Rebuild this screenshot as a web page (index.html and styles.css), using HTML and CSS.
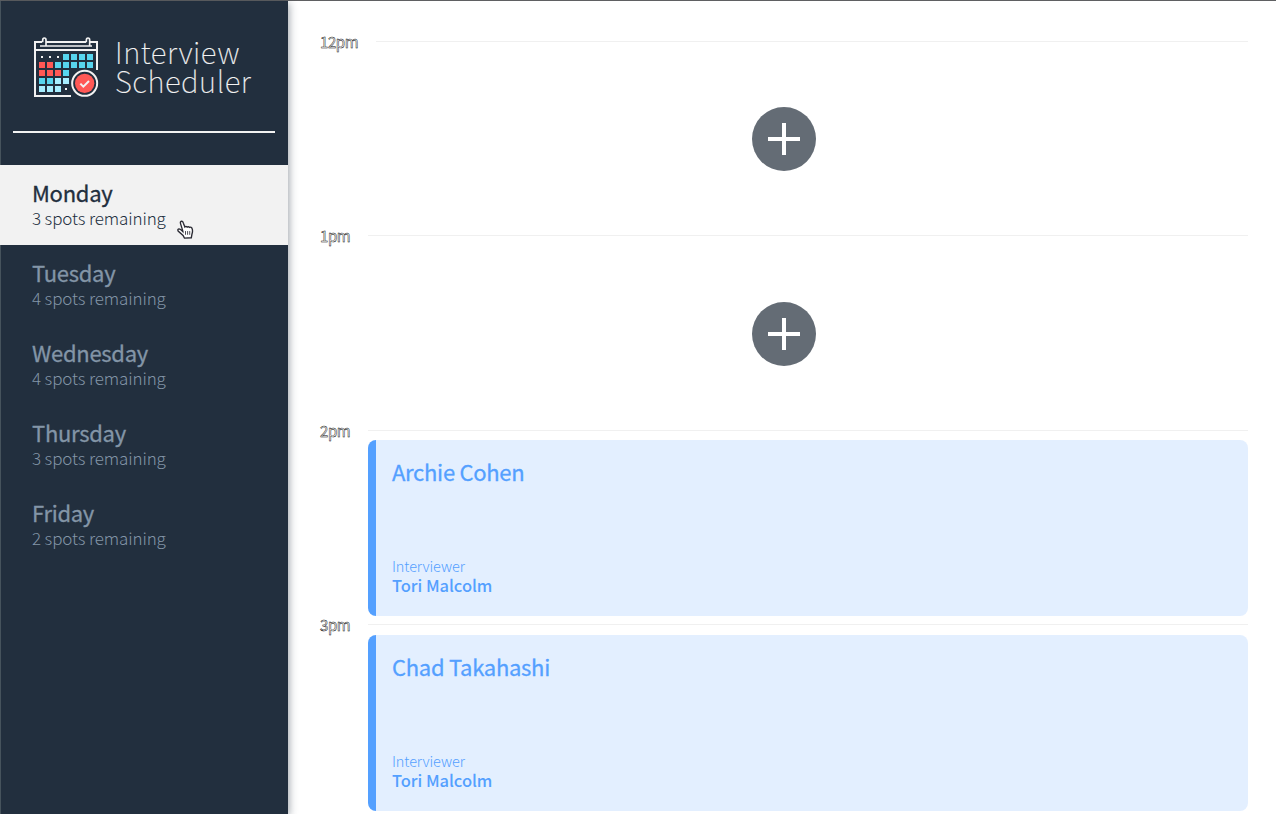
FILE: index.html
```html
<!DOCTYPE html>
<html lang="en">
<head>
<meta charset="utf-8">
<title>Interview Scheduler</title>
<link rel="stylesheet" href="styles.css">
</head>
<body>
<main class="layout">
  <nav class="sidebar">
    <div class="brand">
      <svg class="brand-icon" viewBox="0 0 240 225" aria-hidden="true">
        <g fill="none" stroke="#f2f2f2" stroke-width="6">
          <path d="M48 36H27V198H135M60 36H180M192 36H213V120M27 60H213"/>
          <path d="M42 48H60V30Q60 24 55 24Q50 24 50 31V37M60 48H191V30Q191 24 186 24Q181 24 181 31V37M191 48H198" stroke-width="5"/>
        </g>
        <path fill="#f2f2f2" d="M45 78h6v6h-6zM69 78h6v6h-6zM93 78h6v6h-6zM117 174h6v6h-6z"/>
        <path fill="#57d5ee" d="M111 72h18v18h-18zM135 72h18v18h-18zM159 72h18v18h-18zM183 72h18v18h-18zM87 96h18v18H87zM111 96h18v18h-18zM135 96h18v18h-18zM159 96h18v18h-18zM183 96h18v18h-18zM111 120h18v18h-18zM39 144h18v18H39zM63 144h18v18H63z"/>
        <path fill="#ff5855" d="M39 96h18v18H39zM63 96h18v18H63zM39 120h18v18H39zM63 120h18v18H63zM87 120h18v18H87z"/>
        <path fill="#a7eeff" d="M87 144h18v18H87zM111 144h18v18h-18zM39 168h18v18H39zM63 168h18v18H63zM87 168h18v18H87z"/>
        <circle cx="176" cy="160" r="44" fill="#222f3e"/>
        <circle cx="176" cy="160" r="37.500" fill="#222f3e" stroke="#f2f2f2" stroke-width="6"/>
        <circle cx="176" cy="160" r="29" fill="#ff5855"/>
        <path d="M163 161L172 170L189 153" fill="none" stroke="#f2f2f2" stroke-width="6"/>
      </svg>
      <div class="brand-name">Interview<br>Scheduler</div>
    </div>
    <hr class="divider">
    <ul class="days">
      <li class="day day-selected"><h2>Monday</h2><p>3 spots remaining</p>
        <svg class="pointer" viewBox="0 0 16 18" aria-hidden="true"><path d="M5.500 10.500L3.300 3.400Q2.800 1.500 4.100 1.200Q5.400 1 6 3L7.400 6.600Q8.400 5.500 9.500 6.700Q10.800 5.800 11.800 7Q13 6.300 14 7.600Q15.200 10 14.200 13L13.500 16.800L7 17.200L5.700 14.700L1 10.400Q.2 8.700 2 8.400Q3.200 8.400 5.500 11Z" fill="#fff" stroke="#2b2b34" stroke-width="1.300"/><path d="M8 10.500V14M10 10.500V14M12 10.500V14" stroke="#2b2b34" stroke-width=".8"/></svg>
      </li>
      <li class="day"><h2>Tuesday</h2><p>4 spots remaining</p></li>
      <li class="day"><h2>Wednesday</h2><p>4 spots remaining</p></li>
      <li class="day"><h2>Thursday</h2><p>3 spots remaining</p></li>
      <li class="day"><h2>Friday</h2><p>2 spots remaining</p></li>
    </ul>
  </nav>
  <section class="schedule">
    <article class="slot">
      <header class="slot-header"><h4>12pm</h4><hr></header>
      <div class="slot-empty"><svg class="add" viewBox="0 0 64 64"><circle cx="32" cy="32" r="32"/><path d="M32 16V48M16 32H48"/></svg></div>
    </article>
    <article class="slot">
      <header class="slot-header"><h4>1pm</h4><hr></header>
      <div class="slot-empty"><svg class="add" viewBox="0 0 64 64"><circle cx="32" cy="32" r="32"/><path d="M32 16V48M16 32H48"/></svg></div>
    </article>
    <article class="slot">
      <header class="slot-header"><h4>2pm</h4><hr></header>
      <div class="card"><h2>Archie Cohen</h2><div><h5>Interviewer</h5><h3>Tori Malcolm</h3></div></div>
    </article>
    <article class="slot">
      <header class="slot-header"><h4>3pm</h4><hr></header>
      <div class="card"><h2>Chad Takahashi</h2><div><h5>Interviewer</h5><h3>Tori Malcolm</h3></div></div>
    </article>
  </section>
</main>
</body>
</html>
```
FILE: styles.css
```css
* { box-sizing: border-box; margin: 0; padding: 0; }

body {
  font-family: "Noto Sans CJK JP", "Noto Sans", sans-serif;
  background: #fff;
  overflow: hidden;
}

.layout {
  display: flex;
  height: 814px;
  border-top: 1px solid #5f6062;
}

.sidebar {
  flex: none;
  width: 288px;
  background: linear-gradient(90deg, #46535c 1px, #222f3e 1px);
  box-shadow: 1px 2px 8px rgba(34, 47, 62, .45);
}

.brand {
  display: flex;
  height: 130px;
  padding: 29px 0 0 26px;
}

.brand-icon { flex: none; width: 80px; height: 75px; }

.brand-name {
  margin: 7px 0 0 9px;
  color: #f2f2f2;
  font-size: 29.500px;
  font-weight: 100;
  line-height: 29px;
  letter-spacing: .55px;
  -webkit-text-stroke: .2px #f2f2f2;
}

.divider {
  height: 2px;
  margin: 0 13px 32px;
  border: 0;
  background: #f2f2f2;
}

.days { list-style: none; }

.day {
  position: relative;
  height: 80px;
  padding: 14px 32px;
  color: #8395a7;
}

.day h2,
.card h2 {
  font-size: 22px;
  font-weight: 400;
  letter-spacing: -.28px;
  -webkit-text-stroke: .3px currentColor;
}

.day h2 { line-height: 26px; }
.day p { font-size: 17px; font-weight: 300; line-height: 26px; letter-spacing: -.12px; }

.day-selected { background: #f2f2f2; color: #222f3e; }

.pointer {
  position: absolute;
  left: 177px;
  top: 55px;
  width: 17px;
  height: 19px;
}

.schedule { flex: 1; padding: 30.6px 28px 0 32px; }

.slot { height: 194.6px; }

.slot-header { display: flex; height: 19.2px; }

.slot-header h4 {
  color: #fff;
  font-size: 15px;
  font-weight: 400;
  line-height: 19.400px;
  letter-spacing: -.4px;
  -webkit-text-stroke: .45px #000;
}

.slot-header hr {
  flex: 1;
  height: 1px;
  margin: 9px 0 0 18px;
  border: 0;
  background: #f0f0f0;
}

.slot-empty {
  display: flex;
  align-items: center;
  justify-content: center;
  height: 176px;
  padding-top: .5px;
}

.add { width: 64px; height: 64px; }
.add circle { fill: #646c75; }
.add path { fill: none; stroke: #fff; stroke-width: 4; }

.card {
  display: flex;
  flex-direction: column;
  justify-content: space-between;
  height: 176px;
  margin-left: 48px;
  padding: 17px 24px 21px;
  border-radius: 8px;
  background: linear-gradient(90deg, #54a0ff 8px, #e3efff 8px);
  color: #54a0ff;
}

.card h2 { line-height: 28px; }
.card h5 { font-size: 14.500px; font-weight: 300; line-height: 19px; letter-spacing: -.1px; }
.card h3 { font-size: 16.500px; font-weight: 500; line-height: 20px; letter-spacing: -.05px; }
```
